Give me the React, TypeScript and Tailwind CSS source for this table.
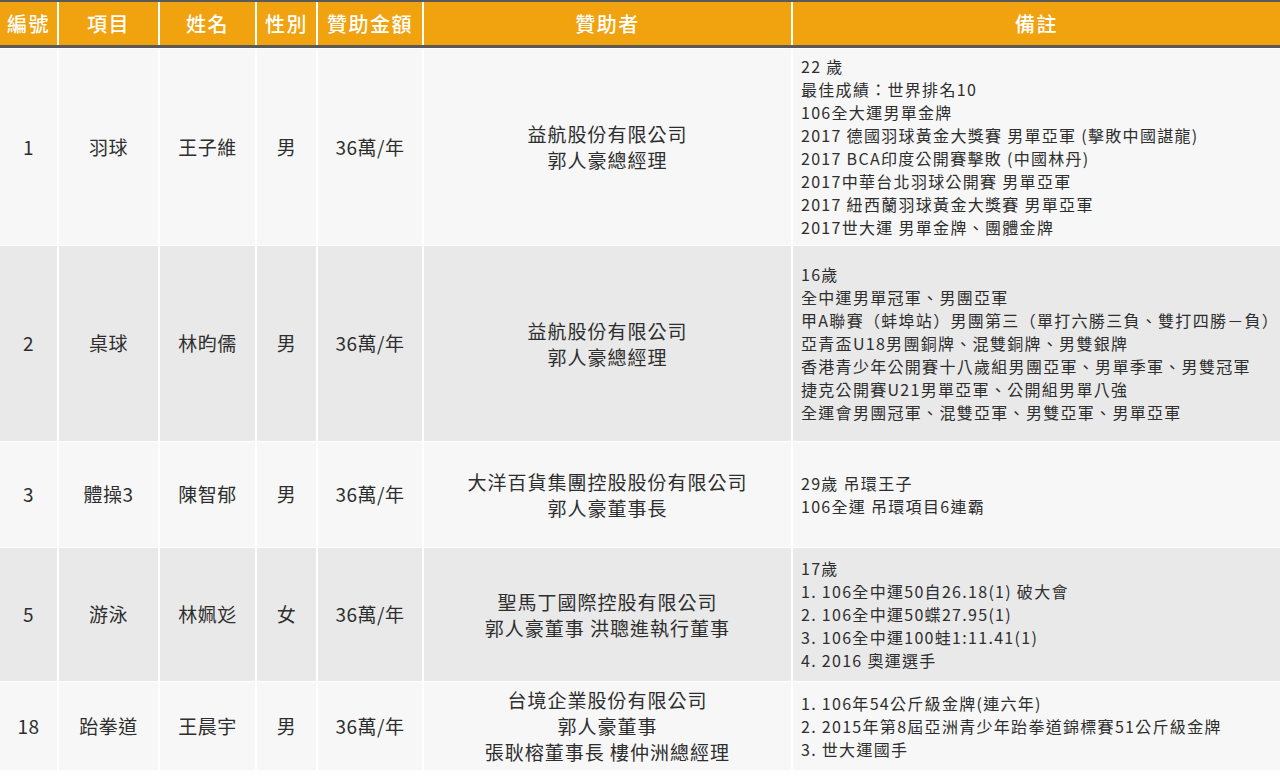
import React from 'react'

interface Row {
  no: string; sport: string; name: string; gender: string; amount: string
  sponsor: string[]; notes: string[]; h: string; bg: string
}

const rows: Row[] = [
  {
    no: '1', sport: '羽球', name: '王子維', gender: '男', amount: '36萬/年',
    sponsor: ['益航股份有限公司', '郭人豪總經理'],
    notes: ['22 歲', '最佳成績：世界排名10', '106全大運男單金牌', '2017 德國羽球黃金大獎賽 男單亞軍 (擊敗中國諶龍)', '2017 BCA印度公開賽擊敗 (中國林丹)', '2017中華台北羽球公開賽 男單亞軍', '2017 紐西蘭羽球黃金大獎賽 男單亞軍', '2017世大運 男單金牌、團體金牌'],
    h: 'h-[197px]', bg: 'bg-[#f7f7f7]',
  },
  {
    no: '2', sport: '桌球', name: '林昀儒', gender: '男', amount: '36萬/年',
    sponsor: ['益航股份有限公司', '郭人豪總經理'],
    notes: ['16歲', '全中運男單冠軍、男團亞軍', '甲A聯賽（蚌埠站）男團第三（單打六勝三負、雙打四勝－負）', '亞青盃U18男團銅牌、混雙銅牌、男雙銀牌', '香港青少年公開賽十八歲組男團亞軍、男單季軍、男雙冠軍', '捷克公開賽U21男單亞軍、公開組男單八強', '全運會男團冠軍、混雙亞軍、男雙亞軍、男單亞軍'],
    h: 'h-[196px]', bg: 'bg-[#e9e9e9]',
  },
  {
    no: '3', sport: '體操3', name: '陳智郁', gender: '男', amount: '36萬/年',
    sponsor: ['大洋百貨集團控股股份有限公司', '郭人豪董事長'],
    notes: ['29歲 吊環王子', '106全運 吊環項目6連霸'],
    h: 'h-[106px]', bg: 'bg-[#f7f7f7]',
  },
  {
    no: '5', sport: '游泳', name: '林姵彣', gender: '女', amount: '36萬/年',
    sponsor: ['聖馬丁國際控股有限公司', '郭人豪董事 洪聰進執行董事'],
    notes: ['17歲', '1. 106全中運50自26.18(1) 破大會', '2. 106全中運50蝶27.95(1)', '3. 106全中運100蛙1:11.41(1)', '4. 2016 奧運選手'],
    h: 'h-[134px]', bg: 'bg-[#e9e9e9]',
  },
  {
    no: '18', sport: '跆拳道', name: '王晨宇', gender: '男', amount: '36萬/年',
    sponsor: ['台境企業股份有限公司', '郭人豪董事', '張耿榕董事長 樓仲洲總經理'],
    notes: ['1. 106年54公斤級金牌(連六年)', '2. 2015年第8屆亞洲青少年跆拳道錦標賽51公斤級金牌', '3. 世大運國手'],
    h: 'h-[89px]', bg: 'bg-[#f7f7f7]',
  },
]

const widths = ['w-[59px]', 'w-[101px]', 'w-[97px]', 'w-[61px]', 'w-[106px]', 'w-[369px]', 'flex-1']
const heads = ['編號', '項目', '姓名', '性別', '贊助金額', '贊助者', '備註']

export default function App() {
  return (
    <div className="w-[1280px] h-[783px] bg-white text-[#2e2e2e] overflow-hidden" style={{ fontFamily: '"Noto Sans CJK TC", "Noto Sans", sans-serif' }}>
      {/* header */}
      <div className="flex h-[48px] bg-[#f0a20f] border-t-2 border-b-[3px] border-[#595959]">
        {heads.map((t, i) => (
          <div key={t} className={`${widths[i]} ${i < 6 ? 'border-r-2 border-white' : ''} flex items-center justify-center text-white text-[20px] tracking-[1.5px] font-medium`}>
            {t}
          </div>
        ))}
      </div>
      <div className="h-[1px]" />

      {rows.map(r => (
        <div key={r.no} className={`flex ${r.h} ${r.bg} border-b border-white`}>
          {[r.no, r.sport, r.name, r.gender, r.amount].map((v, i) => (
            <div key={i} className={`${widths[i]} border-r-2 border-white flex items-center justify-center text-[19px] tracking-[0.5px]`}>
              {v}
            </div>
          ))}
          <div className={`${widths[5]} border-r-2 border-white flex flex-col items-center justify-center text-[19px] leading-[26px] tracking-[1px]`}>
            {r.sponsor.map(s => <span key={s}>{s}</span>)}
          </div>
          <div className="flex-1 flex flex-col justify-center pl-[8px] text-[16px] leading-[23px] tracking-[1.3px]">
            {r.notes.map(n => <span key={n} className="whitespace-nowrap">{n}</span>)}
          </div>
        </div>
      ))}
    </div>
  )
}
